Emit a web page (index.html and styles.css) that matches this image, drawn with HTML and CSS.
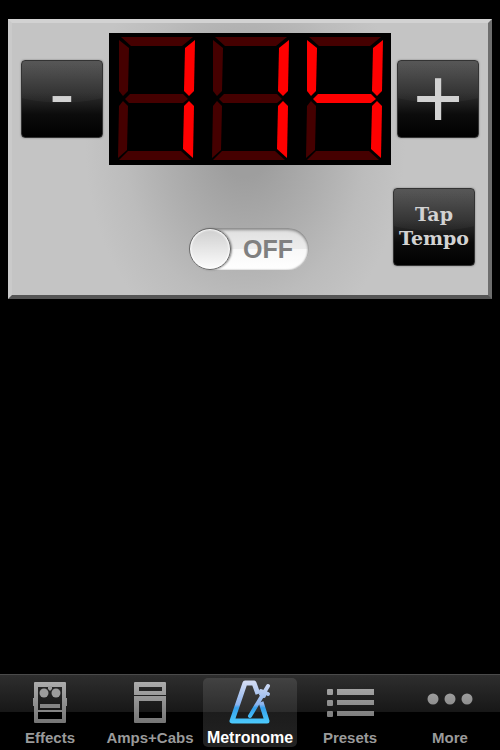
FILE: index.html
```html
<!DOCTYPE html>
<html lang="en">
  <head>
    <meta charset="utf-8">
    <meta name="viewport" content="width=device-width, initial-scale=1">
    <title>Metronome</title>
    <link rel="stylesheet" href="styles.css">
  </head>
  <body>
    <!-- segment shapes, shared by the three digits -->
    <svg class="defs" width="0" height="0" aria-hidden="true">
      <defs>
        <polygon id="seg-a" points="12,4 84,4 73,13 22,13" />
        <polygon id="seg-f" points="10,7 20,15 19,58 14,63 10,58" />
        <polygon id="seg-b" points="86,7 85,58 80,63 75,58 76,15" />
        <polygon id="seg-g" points="16,66 21,61 74,61 79,66 74,70 20,70" />
        <polygon id="seg-e" points="14,68 19,73 18,117 9,125 10,73" />
        <polygon id="seg-c" points="80,68 85,73 84,125 74,116 75,73" />
        <polygon id="seg-d" points="19,118 72,118 82,127 10,127" />
        <linearGradient id="gray" x1="0" y1="0" x2="0" y2="48" gradientUnits="userSpaceOnUse">
          <stop offset="0" stop-color="#b0b0b0" />
          <stop offset="1" stop-color="#707070" />
        </linearGradient>
        <linearGradient id="blue" x1="0" y1="3" x2="0" y2="46" gradientUnits="userSpaceOnUse">
          <stop offset="0" stop-color="#d3dcf3" />
          <stop offset="0.52" stop-color="#8db4ee" />
          <stop offset="0.6" stop-color="#35a0ec" />
          <stop offset="1" stop-color="#4fd0ff" />
        </linearGradient>
      </defs>
    </svg>

    <main class="panel">
      <div class="tempo">
        <button class="key minus" type="button">-</button>
        <div class="display" role="img" aria-label="114">
          <svg class="digit" viewBox="0 0 94 132">
            <use href="#seg-a" /><use href="#seg-f" /><use href="#seg-g" />
            <use href="#seg-e" /><use href="#seg-d" />
            <use class="on" href="#seg-b" /><use class="on" href="#seg-c" />
          </svg>
          <svg class="digit" viewBox="0 0 94 132">
            <use href="#seg-a" /><use href="#seg-f" /><use href="#seg-g" />
            <use href="#seg-e" /><use href="#seg-d" />
            <use class="on" href="#seg-b" /><use class="on" href="#seg-c" />
          </svg>
          <svg class="digit" viewBox="0 0 94 132">
            <use href="#seg-a" /><use href="#seg-e" /><use href="#seg-d" />
            <use class="on" href="#seg-f" /><use class="on" href="#seg-g" />
            <use class="on" href="#seg-b" /><use class="on" href="#seg-c" />
          </svg>
        </div>
        <button class="key plus" type="button">+</button>
      </div>

      <div class="controls">
        <label class="switch">
          <input class="knob" type="checkbox">
          <span>OFF</span>
        </label>
        <button class="key tap" type="button">Tap Tempo</button>
      </div>
    </main>

    <nav class="tabs">
      <a class="tab" href="#effects">
        <svg class="icon" width="50" height="48" viewBox="0 0 50 48">
          <path fill="url(#gray)" fill-rule="evenodd" d="M10 3h30q1 0 1 1v15h1v8h-1v16q0 1-1 1H10q-1 0-1-1V27H8v-8h1V4q0-1 1-1zM13 8v23h24V8zM13 33v7h24v-7z" />
          <circle cx="19" cy="14" r="4.5" fill="#9c9c9c" />
          <circle cx="31" cy="14" r="4.5" fill="#9c9c9c" />
          <path fill="#9c9c9c" d="M23 7h4v3l-2 2-2-2z" />
          <path fill="#858585" d="M15 25h20v4H15z" />
        </svg>
        Effects
      </a>
      <a class="tab" href="#amps">
        <svg class="icon" width="50" height="48" viewBox="0 0 50 48">
          <path fill="url(#gray)" fill-rule="evenodd" d="M10 3h30q1 0 1 1v12H9V4q0-1 1-1zM14 8v4h23V8zM9 17h32v26q0 1-1 1H10q-1 0-1-1zM14 22v17h23V22z" />
        </svg>
        Amps+Cabs
      </a>
      <a class="tab active" href="#metronome" aria-current="page">
        <svg class="icon" width="50" height="48" viewBox="0 0 50 48">
          <g fill="none" stroke="url(#blue)" stroke-width="5" stroke-linejoin="round">
            <path d="M33 15L29 4h-9L7 42h35L36 23" />
            <path d="M25 37L43 7" stroke-width="4" stroke-linecap="round" />
            <path d="M36 12l7 3M36 15l3 2" stroke-width="4" stroke-linecap="round" />
          </g>
        </svg>
        Metronome
      </a>
      <a class="tab" href="#presets">
        <svg class="icon" width="50" height="48" viewBox="0 0 50 48">
          <g fill="url(#gray)">
            <rect x="2" y="10" width="6" height="6" rx="1" />
            <rect x="12" y="10" width="37" height="6" />
            <rect x="2" y="21" width="6" height="6" rx="1" />
            <rect x="12" y="21" width="37" height="5" />
            <rect x="2" y="32" width="6" height="6" rx="1" />
            <rect x="12" y="32" width="37" height="5" />
          </g>
        </svg>
        Presets
      </a>
      <a class="tab" href="#more">
        <svg class="icon" width="50" height="48" viewBox="0 0 50 48">
          <g fill="url(#gray)">
            <circle cx="8" cy="20" r="5.5" />
            <circle cx="25" cy="20" r="5.5" />
            <circle cx="42" cy="20" r="5.5" />
          </g>
        </svg>
        More
      </a>
    </nav>
  </body>
</html>
```
FILE: styles.css
```css
* {
  box-sizing: border-box;
}
body {
  margin: 0;
  min-height: 100vh;
  display: flex;
  flex-direction: column;
  background: #000;
  font-family: "Liberation Sans", Arial, Helvetica, sans-serif;
}
.defs {
  position: absolute;
}

.panel {
  margin: 19px 8px 0;
  padding: 10px 0 25px;
  border: 4px solid;
  border-color: #d2d2d2 #6e6e6e #555 #cacaca;
  background:
    radial-gradient(ellipse 160px 210px at 49% 45%, #9e9e9e 15%, #afafaf 50%, #bcbcbc 75%, rgba(196, 196, 196, 0)),
    #c4c4c4;
}
.tempo {
  display: flex;
  justify-content: center;
  align-items: center;
  gap: 6px;
}
.display {
  display: flex;
  background: #000;
}
.digit {
  width: 94px;
  height: 132px;
  fill: #450000;
}
.digit .on {
  fill: #ff0000;
}

.key {
  width: 82px;
  height: 78px;
  padding: 0;
  border: 1px solid #333;
  border-radius: 4px;
  background:
    radial-gradient(ellipse 90px 42px at 50% 0, rgba(255, 255, 255, 0.03) 98%, transparent),
    linear-gradient(#525252, #303030 40%, #0c0c0c 70%, #000);
  box-shadow: 0 0 2px #777;
  color: #d2d2d2;
  cursor: pointer;
}
.minus,
.plus {
  padding-bottom: 2px;
  font: 86px/74px "Liberation Sans", Arial, sans-serif;
}
.minus {
  font-size: 76px;
  line-height: 64px;
  padding-bottom: 12px;
}
.tap {
  justify-self: end;
  padding-bottom: 2px;
  font: bold 19px/24px "DejaVu Serif", serif;
}

.controls {
  display: grid;
  grid-template-columns: 1fr auto 1fr;
  margin-top: 23px;
  padding-right: 13px;
}
.switch {
  grid-column: 2;
  display: flex;
  align-items: center;
  gap: 12px;
  width: 120px;
  height: 42px;
  margin: 40px 0 0 11px;
  border-radius: 21px;
  background: linear-gradient(#e0e0e0, #ececec 50%, #f8f8f8 51%, #fff);
  box-shadow: inset 0 2px 3px #888, inset -1px 0 2px #aaa;
  color: #808080;
  font-size: 25px;
  font-weight: bold;
  cursor: pointer;
}
.knob {
  appearance: none;
  width: 42px;
  height: 42px;
  margin: 0;
  border: 1px solid #6a6a6a;
  border-radius: 50%;
  background: linear-gradient(#cfcfcf, #fcfcfc);
  box-shadow: inset 0 0 2px 1px #fff, 1px 0 2px #888;
}

.tabs {
  display: flex;
  height: 76px;
  margin-top: auto;
  padding: 3px 0;
  border-top: 1px solid #4a4a4a;
  background: linear-gradient(#2e2e2e, #171717 37px, #000 37px);
}
.tab {
  flex: 1;
  display: flex;
  flex-direction: column;
  align-items: center;
  gap: 2px;
  margin: 0 3px;
  padding-top: 1px;
  border-radius: 5px;
  color: #9a9a9a;
  font-size: 15px;
  line-height: 18px;
  font-weight: bold;
  text-decoration: none;
}
.icon {
  flex-shrink: 0;
}
.tab.active {
  background: linear-gradient(#424242, #2c2c2c 34px, #1c1c1c 34px, #222);
  color: #fff;
  font-size: 16px;
}
```
